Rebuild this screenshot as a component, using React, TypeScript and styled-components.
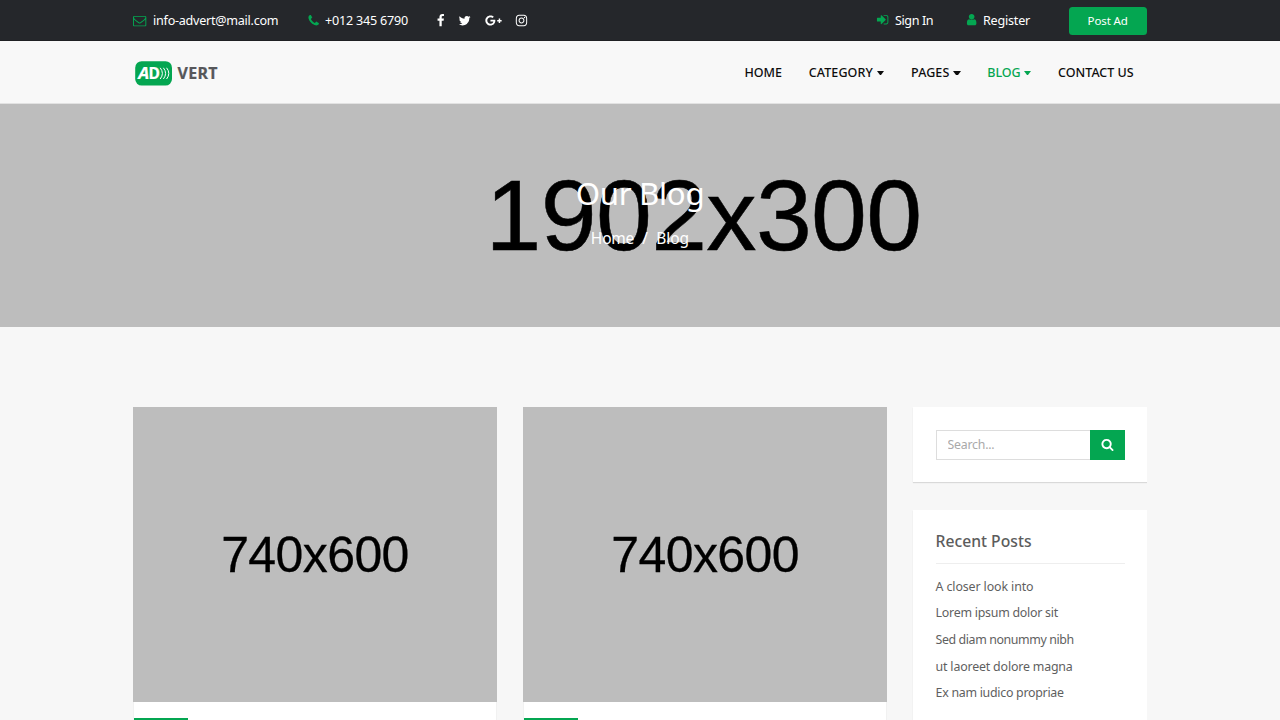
import React from 'react'
import styled, { createGlobalStyle } from 'styled-components'
import { FaGooglePlusG, FaInstagram } from 'react-icons/fa'

const ICONS = {
  envelope:
    'M1664 1504v-768q-32 36-69 66-268 206-426 338-51 43-83 67t-86.5 48.5-102.5 24.5h-2q-48 0-102.5-24.5t-86.5-48.5-83-67q-158-132-426-338-37-30-69-66v768q0 13 9.5 22.5t22.5 9.5h1472q13 0 22.5-9.5t9.5-22.5zm0-1051v-24.5l-.5-13-3-12.5-5.5-9-9-7.5-14-2.5h-1472q-13 0-22.5 9.5t-9.5 22.5q0 168 147 284 193 152 401 317 6 5 35 29.5t46 37.5 44.5 31.5 50.5 27.5 43 9h2q20 0 43-9t50.5-27.5 44.5-31.5 46-37.5 35-29.5q208-165 401-317 54-43 100.5-115.5t46.5-131.5zm128-37v1088q0 66-47 113t-113 47h-1472q-66 0-113-47t-47-113v-1088q0-66 47-113t113-47h1472q66 0 113 47t47 113z',
  phone:
    'M1600 1240q0 27-10 70.5t-21 68.5q-21 50-122 106-94 51-186 51-27 0-53-3.5t-57.5-12.5-47-14.5-55.5-20.5-49-18q-98-35-175-83-127-79-264-216t-216-264q-48-77-83-175-3-9-18-49t-20.5-55.5-14.5-47-12.5-57.5-3.5-53q0-92 51-186 56-101 106-122 25-11 68.5-21t70.5-10q14 0 21 3 18 6 53 76 11 19 30 54t35 63.5 31 53.5q3 4 17.5 25t21.5 35.5 7 28.5q0 20-28.5 50t-62 55-62 53-28.5 46q0 9 5 22.5t8.5 20.5 14 24 11.5 19q76 137 174 235t235 174q2 1 19 11.5t24 14 20.5 8.5 22.5 5q18 0 46-28.5t53-62 55-62 50-28.5q14 0 28.5 7t35.5 21.5 25 17.5q25 15 53.5 31t63.5 35 54 30q70 35 76 53 3 7 3 21z',
  facebook:
    'M1343 12v264h-157q-86 0-116 36t-30 108v189h293l-39 296h-254v759h-306v-759h-255v-296h255v-218q0-186 104-288.5t277-102.5q147 0 228 12z',
  twitter:
    'M1684 408q-67 98-162 167 1 14 1 42 0 130-38 259.5t-115.5 248.5-184.5 210.5-258 146-323 54.5q-271 0-496-145 35 4 78 4 225 0 401-138-105-2-188-64.5t-114-159.5q33 5 61 5 43 0 85-11-112-23-185.5-111.5t-73.5-205.5v-4q68 38 146 41-66-44-105-115t-39-154q0-88 44-163 121 149 294.5 238.5t371.5 99.5q-8-38-8-74 0-134 94.5-228.5t228.5-94.5q140 0 236 102 109-21 205-78-37 115-142 178 93-10 186-50z',
  signIn:
    'M1312 896q0 26-19 45l-544 544q-19 19-45 19t-45-19-19-45v-288h-448q-26 0-45-19t-19-45v-384q0-26 19-45t45-19h448v-288q0-26 19-45t45-19 45 19l544 544q19 19 19 45zm352-352v704q0 119-84.5 203.5t-203.5 84.5h-320q-13 0-22.5-9.5t-9.5-22.5q0-4-1-20t-.5-26.5 3-23.5 10-19.5 20.5-6.5h320q66 0 113-47t47-113v-704q0-66-47-113t-113-47h-312l-11.5-1-11.5-3-8-5.5-7-9-2-13.5q0-4-1-20t-.5-26.5 3-23.5 10-19.5 20.5-6.5h320q119 0 203.5 84.5t84.5 203.5z',
  user: 'M1536 1399q0 109-62.5 187t-150.5 78h-854q-88 0-150.5-78t-62.5-187q0-85 8.5-160.5t31.5-152 58.5-131 94-89 134.5-34.5q131 128 313 128t313-128q76 0 134.5 34.5t94 89 58.5 131 31.5 152 8.5 160.5zm-256-887q0 159-112.5 271.5t-271.5 112.5-271.5-112.5-112.5-271.5 112.5-271.5 271.5-112.5 271.5 112.5 112.5 271.5z',
  search:
    'M1216 832q0-185-131.5-316.5t-316.5-131.5-316.5 131.5-131.5 316.5 131.5 316.5 316.5 131.5 316.5-131.5 131.5-316.5zm512 832q0 52-38 90t-90 38q-54 0-90-38l-343-342q-179 124-399 124-143 0-273.5-55.5t-225-150-150-225-55.5-273.5 55.5-273.5 150-225 225-150 273.5-55.5 273.5 55.5 225 150 150 225 55.5 273.5q0 220-124 399l343 343q37 37 37 90z',
}

const Icon = ({ name, size = 13.3 }: { name: keyof typeof ICONS; size?: number }) => (
  <svg viewBox="0 0 1792 1792" width={size} height={size} fill="currentColor">
    <path d={ICONS[name]} />
  </svg>
)

const Logo = () => (
  <svg width="84" height="26" viewBox="0 0 84 26">
    <rect x="0.2" y="0.2" width="36.8" height="24.4" rx="6.5" fill="#04a651" />
    <g fill="#fff" stroke="#fff" strokeWidth="0.2" fontFamily="Noto Sans, sans-serif" fontWeight="700">
      <text x="3.2" y="17.8" fontSize="15.5" fontStyle="italic" textLength="11" lengthAdjust="spacingAndGlyphs">
        A
      </text>
      <text x="13.6" y="17.8" fontSize="15.5" textLength="11.4" lengthAdjust="spacingAndGlyphs">
        D
      </text>
    </g>
    <g fill="none" stroke="#fff" strokeWidth="1">
      <path d="M25.2 6.8q4.4 5.6 0 11.2" />
      <path d="M28.4 6.8q4.4 5.6 0 11.2" />
      <path d="M31.6 6.8q4.4 5.6 0 11.2" />
    </g>
    <text
      x="42.6"
      y="18"
      fill="#56575a"
      stroke="#56575a"
      strokeWidth="0.2"
      fontFamily="Noto Sans, sans-serif"
      fontWeight="700"
      fontSize="16"
      textLength="40"
    >
      VERT
    </text>
  </svg>
)

const menu = [
  { label: 'HOME', width: 37.5, space: 0 },
  { label: 'CATEGORY', width: 64.5, space: 0.1, caret: true },
  { label: 'PAGES', width: 38.5, space: 0.1, caret: true },
  { label: 'BLOG', width: 33, space: -0.1, caret: true, active: true },
  { label: 'CONTACT US', width: 75.3, space: 0 },
]

const recentPosts = [
  { title: 'A closer look into', space: -0.11 },
  { title: 'Lorem ipsum dolor sit', space: -0.25 },
  { title: 'Sed diam nonummy nibh', space: -0.4 },
  { title: 'ut laoreet dolore magna', space: -0.18 },
  { title: 'Ex nam iudico propriae', space: -0.28 },
]

export default function App() {
  return (
    <Page>
      <GlobalStyle />
      <TopBar>
        <Container>
          <Contact $gap={6.5} $width={173.8}>
            <Icon name="envelope" />
            <TopText $space={-0.27}>info-advert@mail.com</TopText>
          </Contact>
          <Contact $gap={4.6} $width={127}>
            <Icon name="phone" />
            <TopText $space={-0.22}>+012 345 6790</TopText>
          </Contact>
          <Social>
            <Icon name="facebook" />
            <Icon name="twitter" />
            <FaGooglePlusG size={17} />
            <FaInstagram size={13} />
          </Social>
          <Account>
            <Contact $gap={5.5} $width={88.5}>
              <Icon name="signIn" />
              <TopText $space={-0.4}>Sign In</TopText>
            </Contact>
            <Contact $gap={5} $width={104}>
              <Icon name="user" />
              <TopText $space={-0.22}>Register</TopText>
            </Contact>
            <PostAd>Post Ad</PostAd>
          </Account>
        </Container>
      </TopBar>
      <NavBar>
        <Container>
          <Brand>
            <Logo />
          </Brand>
          <Menu>
            {menu.map(({ label, width, space, caret, active }) => (
              <MenuItem key={label} $active={active}>
                <MenuLabel $width={width} $space={space}>
                  {label}
                </MenuLabel>
                {caret && <Caret />}
              </MenuItem>
            ))}
          </Menu>
        </Container>
      </NavBar>
      <Hero>
        <HeroSize>1902x300</HeroSize>
        <HeroTitle>Our Blog</HeroTitle>
        <Breadcrumb>
          <Crumb $space={-0.2}>Home</Crumb>
          <Slash>/</Slash>
          <Crumb $space={0}>Blog</Crumb>
        </Breadcrumb>
      </Hero>
      <Content>
        <Post>
          <PostImage>740x600</PostImage>
          <PostTag />
        </Post>
        <Post>
          <PostImage>740x600</PostImage>
          <PostTag />
        </Post>
        <Sidebar>
          <Widget>
            <SearchForm>
              <SearchInput placeholder="Search..." />
              <SearchButton>
                <Icon name="search" size={13} />
              </SearchButton>
            </SearchForm>
          </Widget>
          <Widget>
            <WidgetTitle>Recent Posts</WidgetTitle>
            <RecentList>
              {recentPosts.map(({ title, space }) => (
                <RecentItem key={title} $space={space}>
                  {title}
                </RecentItem>
              ))}
            </RecentList>
          </Widget>
        </Sidebar>
      </Content>
    </Page>
  )
}

const GlobalStyle = createGlobalStyle`
  * {
    box-sizing: border-box;
  }
  body {
    margin: 0;
    background: #f7f7f7;
    font-family: 'Noto Sans', 'Open Sans', sans-serif;
  }
  svg {
    display: block;
    flex-shrink: 0;
  }
`
const Page = styled.div`
  display: flex;
  flex-direction: column;
  height: 100vh;
  overflow: hidden;
`
const Container = styled.div`
  display: flex;
  width: 1013.4px;
  height: 100%;
  margin: 0 auto;
`
const TopBar = styled.header`
  flex: none;
  height: 41px;
  background: #25272b;
  border-bottom: 1px solid #1f2023;
  color: #fff;
`
const Contact = styled.div<{ $gap: number; $width: number }>`
  display: flex;
  align-items: center;
  gap: ${({ $gap }) => $gap}px;
  width: ${({ $width }) => $width}px;
  height: 41px;

  svg {
    color: #04a651;
  }
`
const TopText = styled.span<{ $space: number }>`
  font-size: 12.6px;
  letter-spacing: ${({ $space }) => $space}px;
  white-space: nowrap;
`
const Social = styled.div`
  display: flex;
  align-items: center;
  gap: 11px;
  height: 41px;

  svg:nth-child(3) {
    margin-left: 2.6px;
  }
  svg:nth-child(4) {
    margin-left: 1.4px;
  }
`
const Account = styled.div`
  display: flex;
  margin-left: auto;
  margin-top: -0.5px;
`
const PostAd = styled.button`
  width: 78px;
  height: 28.6px;
  margin-top: 7px;
  padding: 0;
  border: 0;
  border-radius: 3.5px;
  background: #04a651;
  color: #fff;
  font-family: inherit;
  font-size: 11.5px;
  letter-spacing: -0.1px;
`
const NavBar = styled.nav`
  flex: none;
  height: 63px;
  background: #f8f8f8;
  border-bottom: 1px solid #e2e2e2;
`
const Brand = styled.div`
  padding: 20px 0 0 1.4px;
`
const Menu = styled.ul`
  display: flex;
  align-items: center;
  gap: 26.8px;
  height: 63px;
  margin: 0 13.3px 0 auto;
  padding: 0;
  list-style: none;
`
const MenuItem = styled.li<{ $active?: boolean }>`
  display: flex;
  align-items: center;
  color: ${({ $active }) => ($active ? '#04a651' : '#0d0d0d')};
`
const MenuLabel = styled.span<{ $width: number; $space: number }>`
  width: ${({ $width }) => $width}px;
  font-size: 12.5px;
  font-weight: 500;
  letter-spacing: ${({ $space }) => $space}px;
  white-space: nowrap;
`
const Caret = styled.span`
  width: 7.2px;
  margin: 1px 0 0 3.8px;
  border-top: 4px solid;
  border-left: 3.6px solid transparent;
  border-right: 3.6px solid transparent;
`
const Hero = styled.section`
  position: relative;
  flex: none;
  display: flex;
  flex-direction: column;
  align-items: center;
  height: 223.4px;
  background: #bdbdbd;
  color: #fff;
`
const HeroSize = styled.div`
  position: absolute;
  top: 54px;
  left: 485.6px;
  color: #000;
  font-family: 'Liberation Sans', Arial, sans-serif;
  font-size: 100.5px;
  line-height: 115px;
  letter-spacing: -0.7px;
  -webkit-text-stroke: 0.5px #000;
`
const HeroTitle = styled.h1`
  position: relative;
  margin: 68px 0 0;
  font-size: 31.2px;
  font-weight: 400;
  line-height: 42px;
  letter-spacing: -0.3px;
`
const Breadcrumb = styled.div`
  position: relative;
  display: flex;
  margin-top: 12px;
  font-size: 15.5px;
  line-height: 24px;
`
const Crumb = styled.span<{ $space: number }>`
  letter-spacing: ${({ $space }) => $space}px;
`
const Slash = styled.span`
  width: 22px;
  text-align: center;
`
const Content = styled.main`
  flex: 1;
  min-height: 0;
  display: grid;
  grid-template-columns: 363.4px 363.4px 233.6px;
  column-gap: 26.8px;
  width: 1013.4px;
  margin: 80px auto 0;
  overflow: hidden;
`
const Post = styled.article`
  background: #fff;
  border: 1px solid #f1f1f1;
  border-width: 0 1px;
`
const PostImage = styled.div`
  display: flex;
  align-items: center;
  justify-content: center;
  height: 294.4px;
  margin: 0 -1px;
  padding-top: 1px;
  background: #bdbdbd;
  color: #000;
  font-family: 'Liberation Sans', Arial, sans-serif;
  font-size: 50px;
  letter-spacing: -0.6px;
  -webkit-text-stroke: 0.3px #000;
`
const PostTag = styled.div`
  width: 53.5px;
  height: 24px;
  margin-top: 16px;
  background: #04a651;
`
const Sidebar = styled.aside`
  display: flex;
  flex-direction: column;
  gap: 28px;
  margin: 0 0 0 -0.5px;
`
const Widget = styled.section`
  flex: none;
  padding: 22.3px 22.4px;
  background: #fff;
  box-shadow: 0 1px 1px rgba(0, 0, 0, 0.12);
`
const SearchForm = styled.div`
  display: flex;
  height: 30.2px;
`
const SearchInput = styled.input`
  flex: 1;
  min-width: 0;
  padding: 0 11px 1px;
  border: 1px solid #ddd;
  border-right: 0;
  border-radius: 0;
  font-family: inherit;
  font-size: 12.3px;
  letter-spacing: -0.22px;

  &::placeholder {
    color: #a9a9a9;
  }
`
const SearchButton = styled.button`
  display: flex;
  align-items: center;
  justify-content: center;
  width: 34.6px;
  padding: 0;
  border: 0;
  background: #04a651;
  color: #fff;
`
const WidgetTitle = styled.h2`
  margin: -1.6px 0 0;
  padding: 0 0 12px;
  border-bottom: 1px solid #eee;
  font-size: 15.7px;
  font-weight: 500;
  line-height: 20px;
  color: #5c5c5c;
`
const RecentList = styled.ul`
  margin: 10px 0 40px;
  padding: 0;
  list-style: none;
`
const RecentItem = styled.li<{ $space: number }>`
  font-size: 12.4px;
  line-height: 26.6px;
  letter-spacing: ${({ $space }) => $space}px;
  color: #5f5f5f;
`
